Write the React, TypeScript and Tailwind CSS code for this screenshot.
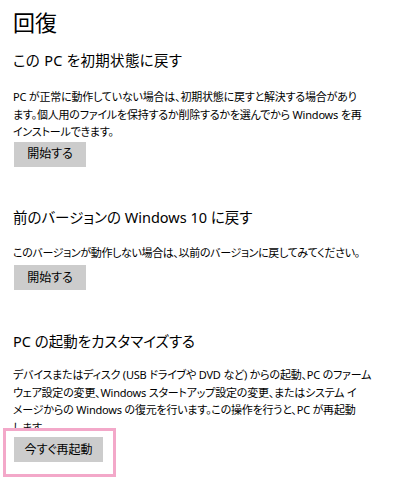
import React from 'react';

const Section = ({
  title,
  lines,
  button,
  buttonWidth,
  titleTop,
  titleTracking,
  bodyTop,
  bodyTracking,
  buttonTop,
}: {
  title: string;
  lines: string[];
  button: string;
  buttonWidth: string;
  titleTop: string;
  titleTracking: string;
  bodyTop: string;
  bodyTracking: string;
  buttonTop: string;
}) => (
  <section>
    <h2 className={`${titleTop} ${titleTracking} text-[14.5px] leading-[22px] text-black whitespace-nowrap`}>{title}</h2>
    <p className={`${bodyTop} ${bodyTracking} text-[11px] leading-[17.5px] text-black whitespace-nowrap`}>
      {lines.map((l, i) => (
        <React.Fragment key={i}>
          {l}
          {i < lines.length - 1 && <br />}
        </React.Fragment>
      ))}
    </p>
    <button className={`${buttonTop} ${buttonWidth} relative z-10 ml-[1px] h-[25px] bg-[#cccccc] text-[12px] text-black flex items-center justify-center`}>
      {button}
    </button>
  </section>
);

export default function App() {
  return (
    <div className="relative w-[400px] h-[492px] bg-white overflow-hidden px-[13px] pt-[8px] font-['Noto_Sans','Noto_Sans_CJK_JP',sans-serif] [font-feature-settings:'palt']">
      <h1 className="text-[22px] leading-[28px] text-black">回復</h1>

      <Section
        title="この PC を初期状態に戻す"
        lines={[
          'PC が正常に動作していない場合は、初期状態に戻すと解決する場合があり',
          'ます。個人用のファイルを保持するか削除するかを選んでから Windows を再',
          'インストールできます。',
        ]}
        button="開始する"
        buttonWidth="w-[72px]"
        titleTop="mt-[13px]"
        titleTracking="tracking-[0.3px]"
        bodyTop="mt-[17px]"
        bodyTracking="tracking-[-0.2px]"
        buttonTop="mt-[1px]"
      />

      <Section
        title="前のバージョンの Windows 10 に戻す"
        lines={['このバージョンが動作しない場合は、以前のバージョンに戻してみてください。']}
        button="開始する"
        buttonWidth="w-[72px]"
        titleTop="mt-[39px]"
        titleTracking="tracking-[0px]"
        bodyTop="mt-[16px]"
        bodyTracking="tracking-[-0.35px]"
        buttonTop="mt-[4px]"
      />

      <Section
        title="PC の起動をカスタマイズする"
        lines={[
          'デバイスまたはディスク (USB ドライブや DVD など) からの起動、PC のファーム',
          'ウェア設定の変更、Windows スタートアップ設定の変更、またはシステム イ',
          'メージからの Windows の復元を行います。この操作を行うと、PC が再起動',
          'します。',
        ]}
        button="今すぐ再起動"
        buttonWidth="w-[89px]"
        titleTop="mt-[40px]"
        titleTracking="tracking-[0px]"
        bodyTop="mt-[14px]"
        bodyTracking="tracking-[-0.2px]"
        buttonTop="mt-[1px]"
      />

      {/* pink highlight frame around the restart button */}
      <div className="absolute left-[3px] top-[428px] w-[113px] h-[49px] border-[3px] border-[#f3a8c9] bg-white" />
    </div>
  );
}
